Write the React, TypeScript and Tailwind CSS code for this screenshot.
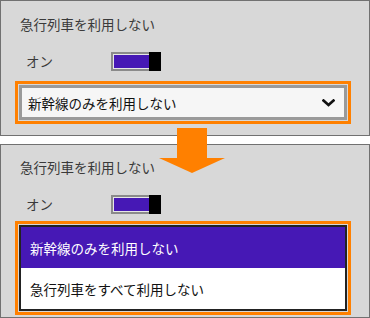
import React from "react";

const font = { fontFamily: '"Noto Sans CJK JP", "Noto Sans", sans-serif' };

function Toggle() {
  return (
    <div className="flex w-[50px] h-[19px]">
      <div className="flex-1 border-2 border-r-0 border-[#8a8a8a] bg-[#e6e6e6] pt-px pb-px pl-px">
        <div className="h-full bg-[#4618b5]" />
      </div>
      <div className="w-[12px] h-full bg-black" />
    </div>
  );
}

function Chevron() {
  return (
    <svg width="13" height="8" viewBox="0 0 13 8">
      <path d="M1.5 1.5 L6.5 6 L11.5 1.5" fill="none" stroke="#111" strokeWidth="2.6" strokeLinecap="square" />
    </svg>
  );
}

export default function App() {
  return (
    <div className="relative w-[370px] h-[318px] bg-white text-[13.5px]" style={font}>
      {/* Panel 1 */}
      <div className="h-[136px] border border-[#717171] bg-[#d8d8d8] pl-[14px] pt-[13px]">
        <div className="ml-[5px] leading-[20px] text-[#3a3a3a]">急行列車を利用しない</div>
        <div className="mt-[18px] flex items-center h-[19px]">
          <div className="ml-[11px] w-[85px] leading-[19px] text-[#3a3a3a]">オン</div>
          <Toggle />
        </div>
        <div className="mt-[10px] w-[336px] border-[3px] border-[#ff8000] p-px">
          <div className="h-[35px] border-[3px] border-[#9a9a9a] bg-[#f6f6f6] flex items-center justify-between pl-[6px] pr-[9px]">
            <span className="text-[#111] leading-[20px]">新幹線のみを利用しない</span>
            <Chevron />
          </div>
        </div>
      </div>
      {/* Panel 2 */}
      <div className="mt-[8px] h-[174px] border border-[#717171] bg-[#d8d8d8] pl-[14px] pt-[12px]">
        <div className="ml-[5px] leading-[20px] text-[#3a3a3a]">急行列車を利用しない</div>
        <div className="mt-[18px] flex items-center h-[19px]">
          <div className="ml-[11px] w-[85px] leading-[19px] text-[#3a3a3a]">オン</div>
          <Toggle />
        </div>
        <div className="mt-[7px] w-[336px] border-[3px] border-[#ff8000] p-px">
          <div className="border-2 border-[#222] bg-white">
            <div className="h-[41px] bg-[#4618b5] text-white flex items-center pl-[9px] leading-[20px]">
              新幹線のみを利用しない
            </div>
            <div className="h-[41px] bg-white text-[#111] flex items-center pl-[9px] leading-[20px]">
              急行列車をすべて利用しない
            </div>
          </div>
        </div>
      </div>
      {/* Arrow overlay */}
      <svg className="absolute left-[159px] top-[128px]" width="66" height="46" viewBox="0 0 66 46">
        <rect x="18" y="0" width="30" height="31" fill="#ff8000" />
        <polygon points="0,30 66,30 33,45" fill="#ff8000" />
      </svg>
    </div>
  );
}
